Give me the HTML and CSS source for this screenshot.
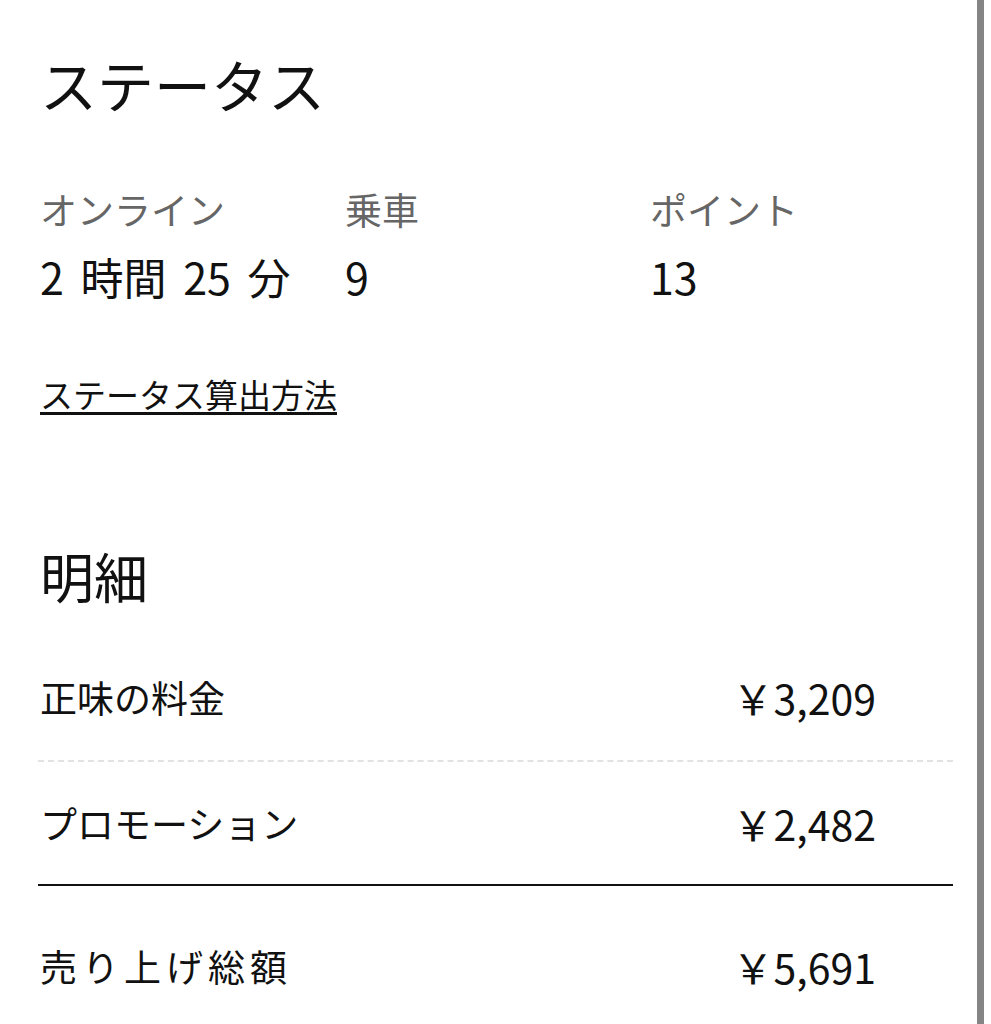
FILE: index.html
```html
<!DOCTYPE html>
<html lang="ja">
<head>
  <meta charset="UTF-8">
  <meta name="viewport" content="width=device-width, initial-scale=1.0">
  <title>ステータス</title>
  <link rel="stylesheet" href="styles.css">
</head>
<body>
  <div class="page">
    <section class="status">
      <h1>ステータス</h1>
      <div class="stats">
        <div class="stat">
          <span class="label">オンライン</span>
          <span class="value">2 時間 25 分</span>
        </div>
        <div class="stat">
          <span class="label">乗車</span>
          <span class="value">9</span>
        </div>
        <div class="stat">
          <span class="label">ポイント</span>
          <span class="value">13</span>
        </div>
      </div>
      <a class="howto" href="#">ステータス算出方法</a>
    </section>

    <section class="detail">
      <h2>明細</h2>
      <div class="row net">
        <span>正味の料金</span>
        <span class="amount">￥3,209</span>
      </div>
      <div class="row promo">
        <span>プロモーション</span>
        <span class="amount">￥2,482</span>
      </div>
      <div class="row total">
        <span class="wide">売り上げ総額</span>
        <span class="amount">￥5,691</span>
      </div>
    </section>
  </div>
</body>
</html>
```

FILE: styles.css
```css
body {
  margin: 0;
  padding: 0;
  background: #fff;
  color: #111;
  font-family: 'Noto Sans CJK JP', 'Noto Sans', sans-serif;
}
.page {
  width: 984px;
  height: 100vh;
  box-sizing: border-box;
  border-right: 7px solid #858585;
  overflow: hidden;
}
.status {
  padding: 55px 0 0 40px;
}
h1 {
  margin: 0;
  font-size: 57px;
  line-height: 56px;
  font-weight: normal;
}
.stats {
  display: grid;
  grid-template-columns: 305px 305px 305px;
  margin-top: 80px;
}
.stat {
  display: flex;
  flex-direction: column;
}
.label {
  color: #666;
  font-size: 37px;
  line-height: 37px;
}
.value {
  margin-top: 26px;
  font-size: 43px;
  line-height: 44px;
  word-spacing: 7px;
}
.howto {
  display: inline-block;
  margin-top: 80px;
  color: #111;
  font-size: 33px;
  line-height: 33px;
  text-decoration: underline;
  text-underline-offset: 4px;
}
.detail {
  padding: 0 0 0 38px;
  width: 915px;
}
h2 {
  margin: 136px 0 0 2px;
  font-size: 54px;
  line-height: 54px;
  font-weight: normal;
}
.row {
  display: flex;
  justify-content: space-between;
  align-items: center;
  padding: 0 77px 0 2px;
  font-size: 37px;
}
.net {
  margin-top: 31px;
  height: 126px;
  border-bottom: 2px dashed #e2e2e2;
}
.promo {
  height: 122px;
}
.total {
  height: 160px;
  border-top: 2px solid #111;
}
.wide {
  letter-spacing: 5px;
}
.amount {
  font-size: 41px;
}
```
